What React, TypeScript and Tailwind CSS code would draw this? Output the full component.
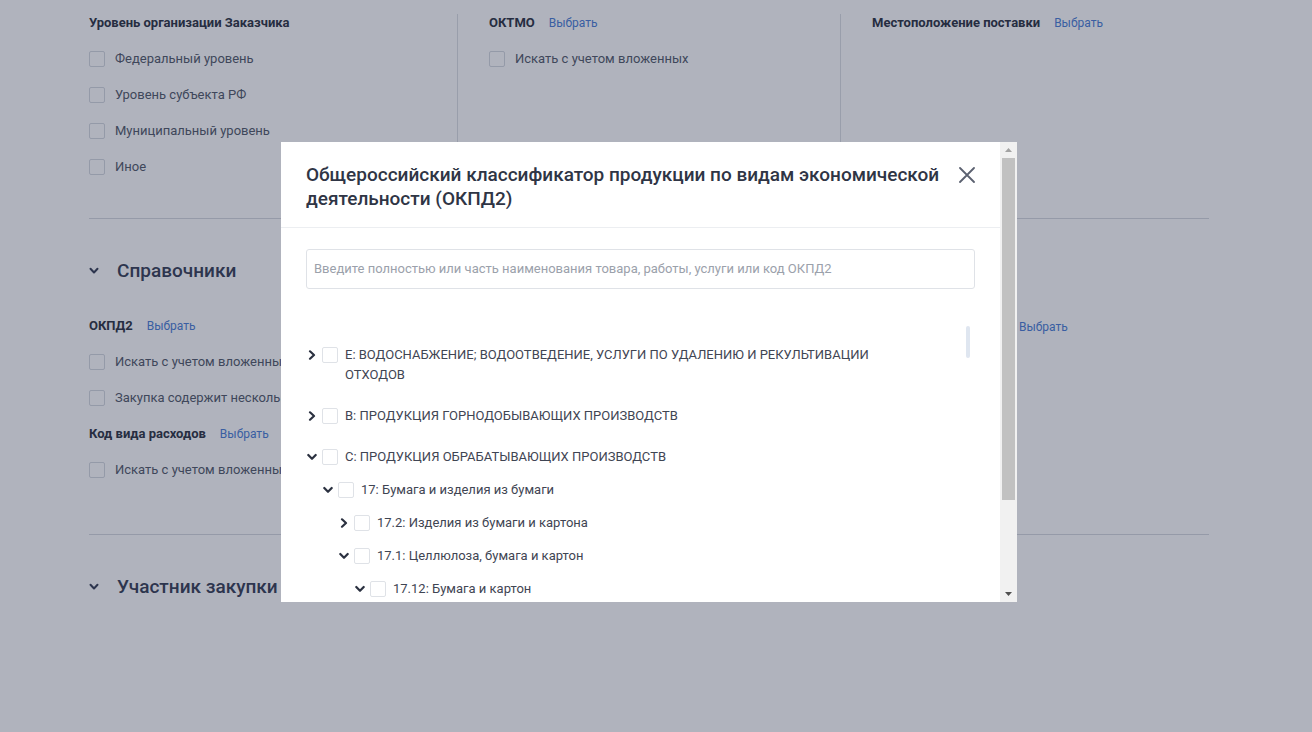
import React from "react";

const Check = ({ cls = "border-[#d5d9e0]" }: { cls?: string }) => (
  <span className={`block w-[16px] h-[16px] shrink-0 rounded-[2px] border bg-white ${cls}`} />
);

const ChevRight = () => (
  <svg width="10" height="10" viewBox="0 0 10 10" className="block">
    <path d="M3 1.3 L7 5 L3 8.7" fill="none" stroke="#2b3140" strokeWidth="2.2" strokeLinecap="round" strokeLinejoin="round" />
  </svg>
);
const ChevDown = () => (
  <svg width="10" height="10" viewBox="0 0 10 10" className="block">
    <path d="M1.3 3 L5 6.8 L8.7 3" fill="none" stroke="#2b3140" strokeWidth="2.2" strokeLinecap="round" strokeLinejoin="round" />
  </svg>
);

const Link = () => <span className="text-[12px] text-[#4d7fd6] font-normal">Выбрать</span>;

const Heading = ({ title, link = false }: { title: string; link?: boolean }) => (
  <div className="flex items-center gap-[14px] h-[16px] text-[13px] font-bold text-[#2f3544] leading-[16px]">
    <span>{title}</span>
    {link && <Link />}
  </div>
);

const Row = ({ label }: { label: string }) => (
  <div className="flex items-center h-[36px] gap-[10px] text-[13px] text-[#555c6b] whitespace-nowrap">
    <Check />
    <span>{label}</span>
  </div>
);

const SectionTitle = ({ title }: { title: string }) => (
  <div className="flex items-center h-[24px]">
    <svg width="10" height="8" viewBox="0 0 10 8" className="block ml-[0px]">
      <path d="M1.5 1.8 L5 5.5 L8.5 1.8" fill="none" stroke="#3a4258" strokeWidth="2" strokeLinecap="round" strokeLinejoin="round" />
    </svg>
    <span className="ml-[18px] text-[19px] font-medium text-[#3a4258] leading-[24px]">{title}</span>
  </div>
);

type Node = { label: string; level: number; state: "open" | "closed"; top: boolean; first?: boolean };

const nodes: Node[] = [
  { label: "Е: ВОДОСНАБЖЕНИЕ; ВОДООТВЕДЕНИЕ, УСЛУГИ ПО УДАЛЕНИЮ И РЕКУЛЬТИВАЦИИ ОТХОДОВ", level: 0, state: "closed", top: true, first: true },
  { label: "В: ПРОДУКЦИЯ ГОРНОДОБЫВАЮЩИХ ПРОИЗВОДСТВ", level: 0, state: "closed", top: true },
  { label: "С: ПРОДУКЦИЯ ОБРАБАТЫВАЮЩИХ ПРОИЗВОДСТВ", level: 0, state: "open", top: true },
  { label: "17: Бумага и изделия из бумаги", level: 1, state: "open", top: false },
  { label: "17.2: Изделия из бумаги и картона", level: 2, state: "closed", top: false },
  { label: "17.1: Целлюлоза, бумага и картон", level: 2, state: "open", top: false },
  { label: "17.12: Бумага и картон", level: 3, state: "open", top: false },
];

const TreeRow = ({ n }: { n: Node }) => {
  const pad = ["pl-0", "pl-[16px]", "pl-[32px]", "pl-[48px]", "pl-[64px]"][n.level];
  const mt = n.first ? "mt-0" : n.top ? "mt-[21px]" : "mt-[13px]";
  return (
    <div className={`flex items-start ${pad} ${mt}`}>
      <span className="w-[12px] h-[20px] flex items-center justify-center shrink-0">
        {n.state === "open" ? <ChevDown /> : <ChevRight />}
      </span>
      <span className="mt-[2px] ml-[4px]">
        <Check cls="border-[#dfe2e7]" />
      </span>
      <span className="ml-[7px] max-w-[545px] text-[13px] leading-[20px] text-[#3f4553]">{n.label}</span>
    </div>
  );
};

export default function App() {
  return (
    <div className="relative w-[1312px] h-[732px] overflow-hidden bg-white font-['Roboto',sans-serif]">
      <div className="ml-[89px] w-[1120px]">
        {/* Section 1 */}
        <div className="flex pt-[14px]">
          <div className="w-[368px] h-[186px] pt-[1px]">
            <Heading title="Уровень организации Заказчика" />
            <div className="mt-[10px]">
              <Row label="Федеральный уровень" />
              <Row label="Уровень субъекта РФ" />
              <Row label="Муниципальный уровень" />
              <Row label="Иное" />
            </div>
          </div>
          <div className="w-[383px] h-[186px] border-l border-[#dcdfe4] pl-[31px] pt-[1px]">
            <Heading title="ОКТМО" link />
            <div className="mt-[10px]">
              <Row label="Искать с учетом вложенных" />
            </div>
          </div>
          <div className="flex-1 h-[186px] border-l border-[#dcdfe4] pl-[31px] pt-[1px]">
            <Heading title="Местоположение поставки" link />
          </div>
        </div>
        <div className="mt-[18px] h-px bg-[#d6d9df]" />

        {/* Section 2 */}
        <div className="pt-[40px]">
          <SectionTitle title="Справочники" />
          <div className="flex mt-[25px]">
            <div className="w-[368px]">
              <div className="h-[36px] flex items-center">
                <Heading title="ОКПД2" link />
              </div>
              <Row label="Искать с учетом вложенных" />
              <Row label="Закупка содержит несколько позиций" />
              <div className="h-[36px] flex items-center">
                <Heading title="Код вида расходов" link />
              </div>
              <Row label="Искать с учетом вложенных" />
            </div>
            <div className="w-[383px] pl-[31px]">
              <div className="h-[36px] flex items-center">
                <Heading title="КТРУ" link />
              </div>
            </div>
            <div className="flex-1 pl-[31px]">
              <div className="h-[37px] pt-[1px] flex items-center gap-[11px] text-[13px] font-bold text-[#2f3544]">
                <span className="w-[137px] whitespace-nowrap overflow-hidden">Вид закупки</span>
                <Link />
              </div>
            </div>
          </div>
        </div>
        <div className="mt-[46px] h-px bg-[#d6d9df]" />

        {/* Section 3 */}
        <div className="pt-[40px]">
          <SectionTitle title="Участник закупки" />
        </div>
      </div>

      {/* Overlay */}
      <div className="absolute inset-0 bg-[rgba(20,30,60,0.336)]" />

      {/* Modal */}
      <div className="absolute left-[281px] top-[142px] w-[736px] h-[460px] bg-white flex overflow-hidden">
        <div className="w-[719px] flex flex-col">
          <div className="flex justify-between px-[25px] pt-[21px] pb-[16px]">
            <div className="w-[636px] text-[19px] font-medium leading-[24px] text-[#2f3545]">
              Общероссийский классификатор продукции по видам экономической деятельности (ОКПД2)
            </div>
            <svg width="16" height="16" viewBox="0 0 16 16" className="mt-[4px] shrink-0">
              <path d="M1 1 L15 15 M15 1 L1 15" stroke="#5b6170" strokeWidth="1.8" strokeLinecap="round" />
            </svg>
          </div>
          <div className="h-px bg-[#eceef1]" />
          <div className="px-[25px] pt-[21px]">
            <div className="h-[40px] w-[669px] border border-[#dfe2e7] rounded-[3px] flex items-center px-[7px] text-[13px] text-[#9ba1ab] whitespace-nowrap">
              Введите полностью или часть наименования товара, работы, услуги или код ОКПД2
            </div>
            <div className="relative mt-[37px] pt-[19px]">
              <div className="absolute left-[660px] top-0 w-[4px] h-[32px] rounded-full bg-[#dfe6f0]" />
              {nodes.map((n, i) => (
                <TreeRow key={i} n={n} />
              ))}
            </div>
          </div>
        </div>
        {/* scrollbar */}
        <div className="w-[17px] h-full bg-[#f1f1f1] flex flex-col">
          <div className="h-[16px] flex items-center justify-center">
            <svg width="7" height="4" viewBox="0 0 7 4"><path d="M0 4 L3.5 0 L7 4 Z" fill="#a3a3a3" /></svg>
          </div>
          <div className="mx-[2px] h-[342px] bg-[#c1c1c1]" />
          <div className="flex-1" />
          <div className="h-[17px] flex items-center justify-center">
            <svg width="7" height="4" viewBox="0 0 7 4"><path d="M0 0 L3.5 4 L7 0 Z" fill="#505050" /></svg>
          </div>
        </div>
      </div>
    </div>
  );
}
